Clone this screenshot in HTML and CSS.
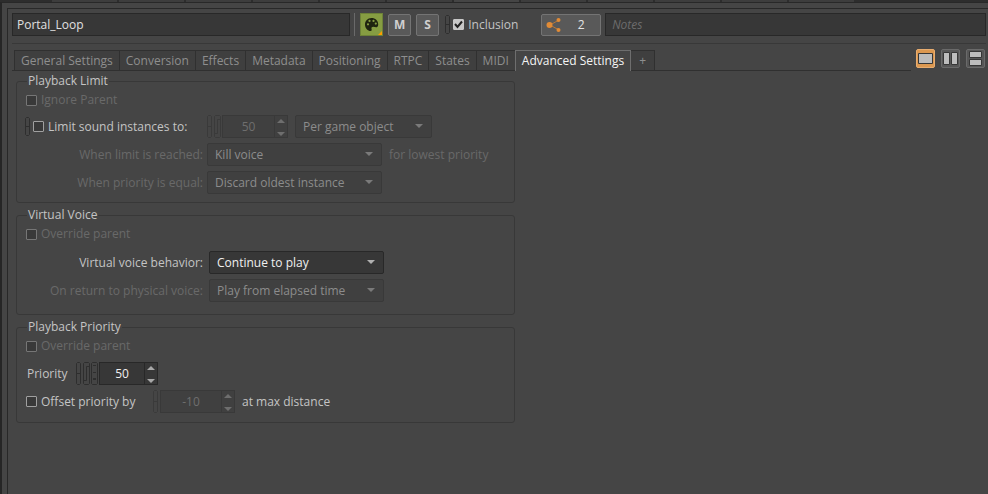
FILE: index.html
```html
<!DOCTYPE html>
<html lang="en">
<head>
<meta charset="utf-8">
<title>Portal_Loop - Property Editor</title>
<link rel="stylesheet" href="styles.css">
</head>
<body>
<svg class="defs" aria-hidden="true">
  <symbol id="link" viewBox="0 0 5 23"><path d="M.5 1.5l1-1h2l1 1v20l-1 1h-2l-1-1zM.5 11.5h4"/></symbol>
  <symbol id="shortlink" viewBox="0 0 5 19"><path d="M.5 1.5l1-1h2l1 1v16l-1 1h-2l-1-1zM.5 9.5h4"/></symbol>
  <symbol id="rand" viewBox="0 0 7 23"><path d="M.5 1.5l1-1h4l1 1v20l-1 1h-4l-1-1zM1 18.5h2.500v-14h3"/></symbol>
  <symbol id="mod" viewBox="0 0 7 23"><path d="M.5 1.500l1-1h4l1 1v20l-1 1h-4l-1-1zM2 3.500h3M2 10.500h3M2 16.500h3M2 17.500h3"/></symbol>
</svg>
<div class="docs"><i></i><i></i><i></i><i></i><i></i><i></i><i class="open"></i><i></i><i></i><i></i><i></i><i></i></div>
<main class="window">
<div class="panel">
  <header class="bar">
    <input class="field name" type="text" aria-label="Name" value="Portal_Loop">
    <span class="divider"></span>
    <button class="color" type="button" aria-label="Color"><svg width="21" height="21" viewBox="0 0 21 21"><path fill="#1f2410" fill-rule="evenodd" d="M10.500 4C6.500 4 4 7 4 10.500c0 4 3 6.500 5.500 6.500 1.500 0 1.300-1.300 1-2.300-.3-1.200.5-2 1.700-2 1.300 0 2.300.8 3.500.5 1.300-.3 1.500-1.700 1.500-2.900C17.200 6.700 14.300 4 10.500 4zM7 9.200a1.100 1.100 0 1 0 0 2.200 1.100 1.100 0 0 0 0-2.200zM8.500 5.800a1.100 1.100 0 1 0 0 2.200 1.100 1.100 0 0 0 0-2.200zM12.500 5.800a1.100 1.100 0 1 0 0 2.200 1.100 1.100 0 0 0 0-2.200zM14.800 8.500a1.100 1.100 0 1 0 0 2.200 1.100 1.100 0 0 0 0-2.200z"/><path fill="#ff9c00" d="M21 17v4h-4z"/></svg></button>
    <button class="ms" type="button">M</button>
    <button class="ms" type="button">S</button>
    <label class="inclusion"><svg class="ind" width="5" height="19"><use href="#shortlink"/></svg><input type="checkbox" checked>Inclusion</label>
    <button class="refs" type="button"><svg width="16" height="16" viewBox="0 0 16 16"><path d="M4 8l9-5M4 8l9 5" stroke="#b87838"/><g fill="#e18b36"><circle cx="3.500" cy="8" r="3"/><circle cx="12.500" cy="3" r="2"/><circle cx="12.500" cy="13" r="2"/></g></svg><span>2</span></button>
    <input class="field notes" type="text" aria-label="Notes" placeholder="Notes">
  </header>
  <div class="tabrow">
    <nav class="tabs">
      <button type="button">General Settings</button><button type="button">Conversion</button><button type="button">Effects</button><button type="button">Metadata</button><button type="button">Positioning</button><button type="button">RTPC</button><button type="button">States</button><button type="button">MIDI</button><button type="button" class="active">Advanced Settings</button><button type="button" class="add">+</button>
    </nav>
    <div class="views">
      <button type="button" class="on" aria-label="Single panel"><svg width="17" height="17"><path class="box" d="M1.500 3.500h14v10h-14z"/></svg></button>
      <button type="button" aria-label="Split columns"><svg width="17" height="17"><path class="box" d="M1.500 2.500h6v12h-6zM9.500 2.500h6v12h-6z"/></svg></button>
      <button type="button" aria-label="Split rows"><svg width="17" height="17"><path class="box" d="M2.500 1.500h12v6h-12zM2.500 9.500h12v6h-12z"/></svg></button>
    </div>
  </div>
  <div class="groups">
    <fieldset>
      <legend>Playback Limit</legend>
      <label class="check off"><input type="checkbox" disabled>Ignore Parent</label>
      <div class="row">
        <label class="check limit"><svg class="ind" width="5" height="19"><use href="#shortlink"/></svg><input type="checkbox">Limit sound instances to:</label>
        <svg class="ind dim" width="5" height="23"><use href="#link"/></svg><svg class="ind dim" width="7" height="23"><use href="#rand"/></svg>
        <span class="spin off"><input type="text" aria-label="Instance limit" value="50" disabled><svg width="12" height="21"><path d="M2 7h8l-4-4zM2 16h8l-4 4z"/></svg></span>
        <span class="combo medium off"><select aria-label="Limit scope" disabled><option>Per game object</option></select></span>
      </div>
      <div class="row">
        <label class="cap off" for="reached">When limit is reached:</label>
        <span class="combo off"><select id="reached" disabled><option>Kill voice</option></select></span>
        <span class="after off">for lowest priority</span>
      </div>
      <div class="row">
        <label class="cap off" for="equal">When priority is equal:</label>
        <span class="combo off"><select id="equal" disabled><option>Discard oldest instance</option></select></span>
      </div>
    </fieldset>
    <fieldset class="voice">
      <legend>Virtual Voice</legend>
      <label class="check off"><input type="checkbox" disabled>Override parent</label>
      <div class="row">
        <label class="cap" for="behavior">Virtual voice behavior:</label>
        <span class="combo"><select id="behavior"><option>Continue to play</option></select></span>
      </div>
      <div class="row">
        <label class="cap off" for="onreturn">On return to physical voice:</label>
        <span class="combo off"><select id="onreturn" disabled><option>Play from elapsed time</option></select></span>
      </div>
    </fieldset>
    <fieldset class="priority">
      <legend>Playback Priority</legend>
      <label class="check off"><input type="checkbox" disabled>Override parent</label>
      <div class="row">
        <label class="plabel" for="prio">Priority</label>
        <svg class="ind" width="5" height="23"><use href="#link"/></svg><svg class="ind" width="7" height="23"><use href="#rand"/></svg><svg class="ind tight" width="7" height="23"><use href="#mod"/></svg>
        <span class="spin narrow"><input id="prio" type="text" value="50"><svg width="12" height="21"><path d="M2 7h8l-4-4zM2 16h8l-4 4z"/></svg></span>
      </div>
      <div class="row">
        <label class="check offset"><input type="checkbox">Offset priority by</label>
        <svg class="ind dim" width="5" height="23"><use href="#link"/></svg>
        <span class="spin wide off"><input type="text" aria-label="Priority offset" value="-10" disabled><svg width="12" height="21"><path d="M2 7h8l-4-4zM2 16h8l-4 4z"/></svg></span>
        <span class="after">at max distance</span>
      </div>
    </fieldset>
  </div>
</div>
</main>
</body>
</html>
```
FILE: styles.css
```css
* { box-sizing: border-box; }
body {
  margin: 0;
  min-height: 100vh;
  display: flex;
  flex-direction: column;
  background: #454545;
  color: #c4c4c4;
  font: 12px/16px "Open Sans", "Noto Sans", sans-serif;
}
button, input, select { font: inherit; color: inherit; margin: 0; padding: 0; }
svg { flex: none; display: block; }
.defs { position: absolute; width: 0; height: 0; }

.docs { display: flex; gap: 2px; height: 2px; padding-left: 52px; background: #2d2d2d; }
.docs i { width: 65px; background: #3d3d3d; }
.docs .open { background: #454545; }

.window {
  flex: 1;
  display: flex;
  border-top: 1px solid #282828;
  border-left: 2px solid #262626;
  padding: 5px 0 0 5px;
}
.panel {
  flex: 1;
  min-width: 0;
  border-top: 1px solid #282828;
  border-left: 1px solid #282828;
  padding: 4px 2px 0 4px;
}

.bar { display: flex; align-items: center; height: 23px; }
.field {
  height: 23px;
  border: 1px solid #282828;
  background: #373737;
  padding: 0 4px;
  min-width: 0;
}
.name { flex: 339 1 0; color: #e0e0e0; }
.notes { flex: 381 1 0; margin-left: 4px; padding-left: 6px; }
.notes::placeholder { color: #6c6c6c; font-style: italic; opacity: 1; }
.divider { width: 1px; height: 23px; background: #6a6a6a; margin: 0 5px 0 4px; }
.color { width: 23px; height: 23px; border: 1px solid #6d8238; background: #869d42; }
.ms {
  width: 23px;
  height: 22px;
  margin-left: 5px;
  border: 1px solid #747474;
  border-radius: 2px;
  background: #595959;
  color: #d0d0d0;
  font-weight: 700;
  line-height: 18px;
}
.inclusion { display: flex; align-items: center; width: 96px; margin-left: 6px; }
.inclusion input { margin: 0 4px 0 3px; }
.refs {
  display: flex;
  align-items: center;
  width: 60px;
  height: 22px;
  padding-left: 4px;
  border: 1px solid #747474;
  border-radius: 2px;
  background: #595959;
  color: #e4e4e4;
}
.refs span { flex: 1; text-align: center; }

.tabrow {
  display: flex;
  align-items: flex-end;
  margin-top: 7px;
  padding-top: 5px;
  border-top: 1px solid #383838;
}
.tabs {
  flex: 1;
  display: flex;
  padding-left: 2px;
  border-bottom: 1px solid #303030;
}
.tabs button {
  height: 20px;
  padding: 0 6px;
  border: 1px solid #303030;
  border-width: 1px 0 0 1px;
  background: #3f3f3f;
  color: #8e8e8e;
  line-height: 19px;
}
.tabs .active {
  height: 21px;
  margin-bottom: -1px;
  padding-bottom: 1px;
  border: 1px solid #6e6e6e;
  border-bottom: 0;
  background: #454545;
  color: #f4f4f4;
}
.tabs .add { width: 24px; border-left: 0; border-right: 1px solid #303030; }
.views { display: flex; gap: 6px; padding: 0 1px 3px 5px; }
.views button {
  width: 19px;
  height: 19px;
  border: 1px solid #6a6a6a;
  border-radius: 2px;
  background: #565656;
}
.views .on { background: #dc9850; border-color: #e8ad70; }
.box { fill: #bcbcbc; stroke: #363636; }

.groups { max-width: 503px; padding: 3px 0 12px 4px; }
fieldset {
  margin: 0 0 5px;
  padding: 4px 8px 8px;
  min-width: 0;
  border: 1px solid #383838;
  border-radius: 3px;
}
legend { margin-left: 2px; padding: 0 1px; height: 14px; line-height: 14px; }
.check { display: flex; align-items: center; padding-left: 1px; }
.check input { margin-right: 4px; }
.off { color: #696969; }
input[type="checkbox"] {
  appearance: none;
  width: 11px;
  height: 11px;
  flex: none;
  border: 1px solid #a0a0a0;
  border-radius: 1px;
  background: #393939;
}
input[type="checkbox"]:disabled { border-color: #767676; }
.inclusion input:checked {
  background: #c8c8c8 url("data:image/svg+xml,%3Csvg xmlns='http://www.w3.org/2000/svg' viewBox='0 0 9 9'%3E%3Cpath d='M1 4l2.500 3L8 1.500' fill='none' stroke='%23222' stroke-width='2'/%3E%3C/svg%3E") center / 9px 9px no-repeat;
  border-color: #c8c8c8;
}
.row { display: flex; align-items: center; height: 23px; margin-top: 5px; }
.check + .row { margin-top: 7px; }
.ind { fill: none; stroke: #2e2e2e; }
.dim { stroke: #3a3a3a; }
.ind + .ind { margin-left: 2px; }
.ind + .tight { margin-left: 1px; }
.ind + .spin { margin-left: 1px; }

.limit { width: 182px; padding: 0; }
.limit input { margin-left: 3px; }
.cap { width: 178px; margin-right: 4px; text-align: right; white-space: nowrap; }
.voice .cap { margin-right: 6px; }
.combo { position: relative; width: 175px; height: 23px; color: #f0f0f0; }
.medium { width: 137px; margin-left: 7px; }
.combo select {
  appearance: none;
  width: 100%;
  height: 23px;
  padding: 0 26px 0 7px;
  border: 1px solid #282828;
  border-radius: 2px;
  background: #373737;
  opacity: 1;
}
.combo::after {
  content: "";
  position: absolute;
  right: 9px;
  top: 9px;
  border: solid transparent;
  border-width: 4px 4px 0;
  border-top-color: #b0b0b0;
}
.combo.off { color: #8c8c8c; }
.combo.off select { border-color: #393939; background: #404040; }
.combo.off::after { border-top-color: #7a7a7a; }
.after { margin-left: 7px; }

.spin {
  display: flex;
  width: 66px;
  height: 23px;
  border: 1px solid #282828;
  background: #373737;
  color: #f0f0f0;
}
.spin input {
  flex: 1;
  min-width: 0;
  border: 0;
  border-right: 1px solid #282828;
  background: none;
  text-align: center;
}
.spin svg { fill: #a8a8a8; }
.spin.off { border-color: #393939; background: #404040; color: #6e6e6e; }
.spin.off input { border-color: #393939; }
.spin.off svg { fill: #6e6e6e; }
.narrow { width: 59px; }
.wide { width: 75px; }
.ind + .wide { margin-left: 2px; }
.voice { padding-bottom: 12px; }
.voice .check + .row { margin-top: 9px; }
.priority { padding-bottom: 9px; }
.priority .check + .row { margin-top: 8px; }
.plabel { width: 51px; padding-left: 2px; }
.offset { width: 128px; }
```
